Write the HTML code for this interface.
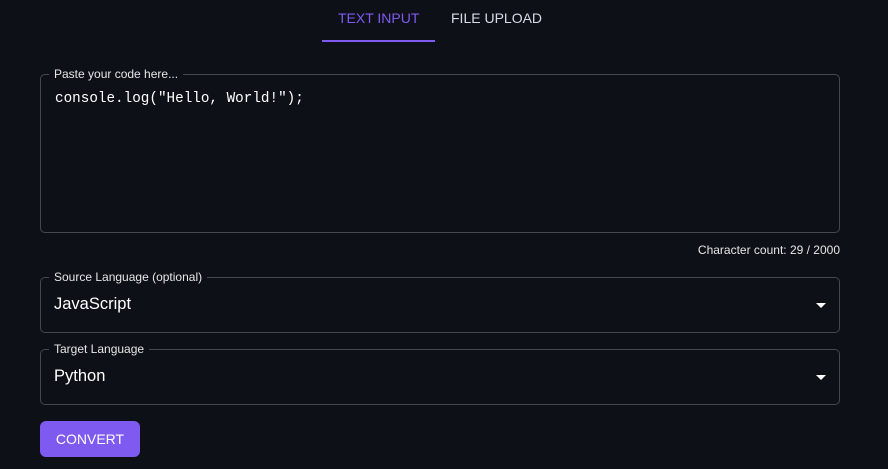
<!DOCTYPE html>
<html><head><style>
body{margin:0;width:888px;height:469px;background:#0d1017;font-family:"Liberation Sans",sans-serif;position:relative;overflow:hidden;color:#fff}
.a{position:absolute}
.box{position:absolute;border:1px solid #45484f;border-radius:5px;box-sizing:border-box}
.lbl{position:absolute;background:#0d1017;padding:0 5px;font-size:12px;color:#e6e6e6;line-height:14px}
.arrow{position:absolute;width:0;height:0;border-left:5px solid transparent;border-right:5px solid transparent;border-top:5px solid #fff}
</style></head><body>
<div class="a" style="left:338px;top:10px;font-size:14px;color:#7f5af0">TEXT INPUT</div>
<div class="a" style="left:451px;top:10px;font-size:14px;color:#d7dce4">FILE UPLOAD</div>
<div class="a" style="left:322px;top:40px;width:113px;height:2px;background:#7f5af0"></div>

<div class="box" style="left:40px;top:74px;width:800px;height:159px"></div>
<div class="lbl" style="left:49px;top:67px">Paste your code here...</div>
<div class="a" style="left:55px;top:91px;font-family:'Liberation Mono',monospace;font-size:14.3px;color:#fff">console.log("Hello, World!");</div>
<div class="a" style="right:48px;top:243px;font-size:12px;color:#e6e6e6">Character count: 29 / 2000</div>

<div class="box" style="left:40px;top:277px;width:800px;height:56px"></div>
<div class="lbl" style="left:49px;top:270px">Source Language (optional)</div>
<div class="a" style="left:54px;top:295px;font-size:16.5px">JavaScript</div>
<div class="arrow" style="left:816px;top:303px"></div>

<div class="box" style="left:40px;top:349px;width:800px;height:56px"></div>
<div class="lbl" style="left:49px;top:342px">Target Language</div>
<div class="a" style="left:54px;top:367px;font-size:16.5px">Python</div>
<div class="arrow" style="left:816px;top:375px"></div>

<div class="a" style="left:40px;top:421px;width:100px;height:36px;background:#7f5af0;border-radius:6px;font-size:14px;line-height:36px;text-align:center;color:#fff">CONVERT</div>
</body></html>
